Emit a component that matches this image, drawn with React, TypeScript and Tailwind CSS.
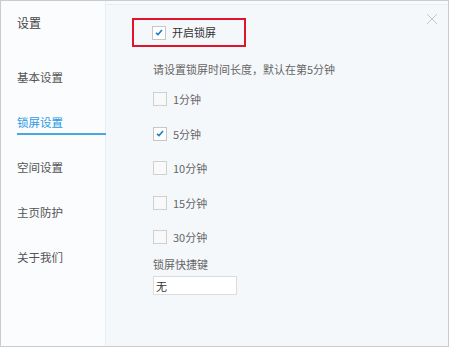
const font = { fontFamily: '"Noto Sans CJK SC", "Noto Sans", sans-serif' };

const menu = ["基本设置", "锁屏设置", "空间设置", "主页防护", "关于我们"];
const times = [
  { label: "1分钟", checked: false },
  { label: "5分钟", checked: true },
  { label: "10分钟", checked: false },
  { label: "15分钟", checked: false },
  { label: "30分钟", checked: false },
];

function Check({ checked }: { checked: boolean }) {
  return (
    <span
      className={
        "flex h-[14px] w-[14px] shrink-0 items-center justify-center border " +
        (checked ? "border-[#c6c6c6] bg-white" : "border-[#d0d0d0] bg-[#f9f9f9]")
      }
    >
      {checked && (
        <svg width="8" height="7" viewBox="0 0 8 7">
          <path d="M1 3.8 L3 5.6 L7 1" fill="none" stroke="#1f7fc4" strokeWidth="1.6" />
        </svg>
      )}
    </span>
  );
}

export default function App() {
  return (
    <div className="h-[348px] w-[450px] bg-white" style={font}>
      <div className="flex h-[347px] w-[449px] border border-[#cbcbcb]">
        {/* sidebar */}
        <div className="flex w-[105px] shrink-0 flex-col border-r border-[#e9eef3] bg-[#fbfcfe] pl-[16px] pt-[14px]">
          <div className="h-[16px] text-[12px] leading-[16px] text-[#444]">设置</div>
          <ul className="mt-[24px]">
            {menu.map((m, i) => (
              <li
                key={m}
                className={
                  "relative flex h-[45px] items-center text-[11.5px] " +
                  (i === 1 ? "text-[#2b9ae0]" : "text-[#555]")
                }
              >
                {m}
                {i === 1 && (
                  <span className="absolute left-0 right-[-1px] top-[33px] h-[2px] bg-[#4ba6e2]" />
                )}
              </li>
            ))}
          </ul>
        </div>

        {/* content */}
        <div className="relative flex-1 bg-[#f5f8fb]">
          <div className="h-[4px] border-b border-[#e6ecf2] bg-[#f8fafc]" />
          <button className="absolute right-[10px] top-[12px] text-[#c3c8cd]">
            <svg width="12" height="12" viewBox="0 0 12 12">
              <path d="M1 1 L11 11 M11 1 L1 11" stroke="currentColor" strokeWidth="1" />
            </svg>
          </button>

          <div className="pl-[26px] pt-[13px]">
            <div className="flex h-[29px] w-[114px] items-center border-2 border-[#e1142e] pl-[18px]">
              <Check checked />
              <span className="ml-[6px] text-[11px] text-[#333]">开启锁屏</span>
            </div>

            <div className="pl-[21px]">
              <p className="mt-[14px] h-[16px] text-[11px] leading-[16px] text-[#666]">
                请设置锁屏时间长度，默认在第5分钟
              </p>
              <ul className="mt-[5px]">
                {times.map((t) => (
                  <li key={t.label} className="flex h-[34.5px] items-center">
                    <Check checked={t.checked} />
                    <span className="ml-[6px] text-[11px] text-[#666]">{t.label}</span>
                  </li>
                ))}
              </ul>
              <div className="mt-[1px] h-[16px] text-[11px] leading-[16px] text-[#666]">锁屏快捷键</div>
              <input
                readOnly
                value="无"
                className="mt-[3px] h-[19px] w-[84px] border border-[#dcdcdc] bg-white px-[2px] text-[11px] text-[#333] outline-none"
                style={font}
              />
            </div>
          </div>
        </div>
      </div>
    </div>
  );
}
